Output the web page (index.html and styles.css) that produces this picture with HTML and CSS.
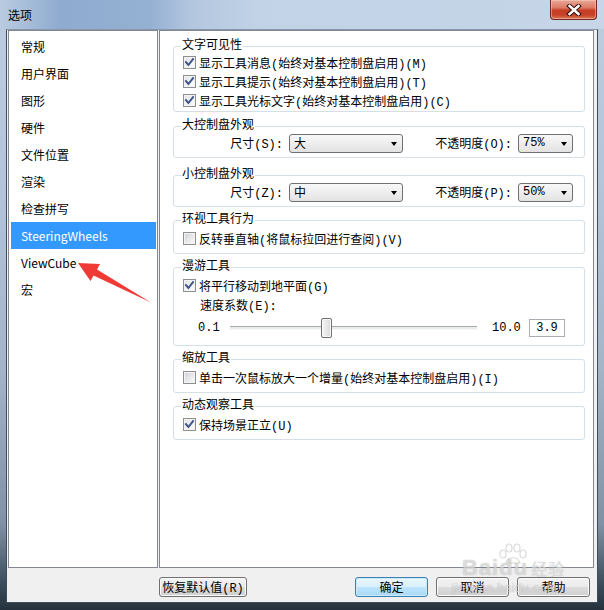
FILE: index.html
```html
<!DOCTYPE html>
<html lang="zh-CN">
<head>
<meta charset="utf-8">
<title>选项</title>
<link rel="stylesheet" href="styles.css">
</head>
<body>
<div class="window">
  <div class="titlebar">
    <span class="title">选项</span>
    <span class="close"><svg width="16" height="12" viewBox="0 0 16 12"><path d="M3.5 2 L12.5 10 M12.5 2 L3.5 10" stroke="#40160f" stroke-width="4.6" stroke-linecap="square" fill="none"/><path d="M3.5 2 L12.5 10 M12.5 2 L3.5 10" stroke="#ffffff" stroke-width="2.4" stroke-linecap="square" fill="none"/></svg></span>
  </div>
  <div class="client">
    <div class="panes">
      <ul class="nav">
        <li>常规</li>
        <li>用户界面</li>
        <li>图形</li>
        <li>硬件</li>
        <li>文件位置</li>
        <li>渲染</li>
        <li>检查拼写</li>
        <li class="sel">SteeringWheels</li>
        <li>ViewCube</li>
        <li>宏</li>
      </ul>
      <div class="content">
        <fieldset class="grp tight">
          <legend>文字可见性</legend>
          <div class="row"><span class="cb on"><svg viewBox="0 0 11 11"><path d="M2 5.2 L4.4 8 L9 2.2"/></svg></span>显示工具消息(始终对基本控制盘启用)(M)</div>
          <div class="row"><span class="cb on"><svg viewBox="0 0 11 11"><path d="M2 5.2 L4.4 8 L9 2.2"/></svg></span>显示工具提示(始终对基本控制盘启用)(T)</div>
          <div class="row"><span class="cb on"><svg viewBox="0 0 11 11"><path d="M2 5.2 L4.4 8 L9 2.2"/></svg></span>显示工具光标文字(始终对基本控制盘启用)(C)</div>
        </fieldset>
        <fieldset class="grp combo spaced">
          <legend>大控制盘外观</legend>
          <div class="ddrow">
            <span class="lbl l1">尺寸(S):</span>
            <span class="dd wide"><span>大</span><i class="tri"></i></span>
            <span class="lbl l2">不透明度(O):</span>
            <span class="dd narrow"><span>75%</span><i class="tri"></i></span>
          </div>
        </fieldset>
        <fieldset class="grp combo">
          <legend>小控制盘外观</legend>
          <div class="ddrow">
            <span class="lbl l1">尺寸(Z):</span>
            <span class="dd wide"><span>中</span><i class="tri"></i></span>
            <span class="lbl l2">不透明度(P):</span>
            <span class="dd narrow"><span>50%</span><i class="tri"></i></span>
          </div>
        </fieldset>
        <fieldset class="grp">
          <legend>环视工具行为</legend>
          <div class="row"><span class="cb"></span>反转垂直轴(将鼠标拉回进行查阅)(V)</div>
        </fieldset>
        <fieldset class="grp walk">
          <legend>漫游工具</legend>
          <div class="row"><span class="cb on"><svg viewBox="0 0 11 11"><path d="M2 5.2 L4.4 8 L9 2.2"/></svg></span>将平行移动到地平面(G)</div>
          <div class="row indent">速度系数(E):</div>
          <div class="slrow">
            <span class="lo">0.1</span>
            <span class="track"><span class="thumb" style="left:calc((100% - 11px) * 0.384)"></span></span>
            <span class="hi">10.0</span>
            <span class="num">3.9</span>
          </div>
        </fieldset>
        <fieldset class="grp">
          <legend>缩放工具</legend>
          <div class="row"><span class="cb"></span>单击一次鼠标放大一个增量(始终对基本控制盘启用)(I)</div>
        </fieldset>
        <fieldset class="grp">
          <legend>动态观察工具</legend>
          <div class="row"><span class="cb on"><svg viewBox="0 0 11 11"><path d="M2 5.2 L4.4 8 L9 2.2"/></svg></span>保持场景正立(U)</div>
        </fieldset>
      </div>
    </div>
    <div class="buttons">
      <button class="btn reset">恢复默认值(R)</button>
      <button class="btn ok">确定</button>
      <button class="btn">取消</button>
      <button class="btn">帮助</button>
    </div>
  </div>
  <svg class="arrow" width="604" height="610" viewBox="0 0 604 610"><polygon points="78,263 100,264 97,269.5 151,302.5 93.5,275.5 90.5,281" fill="#f03a36"/></svg>
  <div class="watermark">
    <svg class="paw" width="34" height="22" viewBox="0 0 34 22"><g fill="none" stroke="rgba(150,150,150,0.35)" stroke-width="1.2"><ellipse cx="7" cy="11" rx="3" ry="4"/><ellipse cx="13" cy="5" rx="3" ry="4"/><ellipse cx="21" cy="5" rx="3" ry="4"/><ellipse cx="27" cy="11" rx="3" ry="4"/><path d="M10 20 C12 13 22 13 24 20 Z"/></g></svg>
    <div class="wm1">Baidu<span class="wmcn">经验</span></div>
    <div class="wm2">jingyan.baidu.com</div>
  </div>
</div>
</body>
</html>
```
FILE: styles.css
```css
* { box-sizing: border-box; }
html, body { margin: 0; padding: 0; }
body {
  width: 604px;
  height: 610px;
  overflow: hidden;
  font-family: "Noto Sans CJK SC", sans-serif;
  font-size: 12px;
  color: #000;
}
.window {
  position: relative;
  width: 604px;
  height: 610px;
  display: flex;
  flex-direction: column;
  padding: 0 6px 7px;
  background: linear-gradient(180deg, #bccde2 0, #b3c5da 30%, #a2b5c9 60%, #7f92a5 86%, #3a4a58 96%, #26333e 100%);
}
.titlebar {
  height: 29px;
  flex: none;
  display: flex;
  justify-content: space-between;
  margin: 0 -6px;
  padding: 0 7px 0 8px;
  background: linear-gradient(90deg, #b9cbe0 0, #a4bcd9 30px, #8fabcf 60px, #94b0d3 150px, #b2c6de 190px, #c2d3e7 260px, #c6d5e8 100%);
}
.title {
  align-self: center;
  line-height: 14px;
  padding-top: 1px;
}
.close {
  width: 47px;
  height: 20px;
  display: flex;
  align-items: center;
  justify-content: center;
  border: 1px solid #6b2a1f;
  border-top: none;
  border-radius: 0 0 4px 4px;
  background: linear-gradient(180deg, #e9a898 0, #dc7b66 40%, #c63d24 55%, #c6432a 80%, #dd7c5a 100%);
  box-shadow: inset 0 0 0 1px rgba(255, 215, 200, 0.45);
}
.client {
  flex: 1;
  display: flex;
  flex-direction: column;
  background: #f0f0f0;
  border: 1px solid #3e4d5b;
  border-top-color: #8797aa;
  padding: 0 3px 5px 0;
}
.panes {
  flex: 1;
  display: flex;
  gap: 1px;
  min-height: 0;
}
.nav {
  list-style: none;
  margin: 0 0 0 1px;
  width: 150px;
  padding: 2px 1px 2px 2px;
  background: #fff;
  border: 1px solid #828790;
}
.nav li {
  height: 27px;
  line-height: 27px;
  padding-left: 10px;
  white-space: nowrap;
}
.nav li.sel {
  background: #3399ff;
  color: #fff;
}
.content {
  flex: 1;
  background: #fff;
  border: 1px solid #828790;
  padding: 8px 8px 0 13px;
  font-family: "Liberation Mono", "Noto Sans CJK SC", monospace;
}
.grp {
  margin: 0 0 6px;
  padding: 2px 8px 5px 9px;
  border: 1px solid #d5dfe5;
  border-radius: 3px;
  min-width: 0;
}
.grp.tight { padding-top: 0; padding-bottom: 1px; margin-bottom: 7px; }
.grp.combo { padding-top: 0; padding-bottom: 4px; }
.grp.spaced { margin-bottom: 10px; }
.grp.walk { padding-bottom: 7px; }
.grp legend {
  padding: 0 1px;
  margin-left: -2px;
  line-height: 14px;
}
.row {
  display: flex;
  align-items: center;
  height: 19px;
  white-space: nowrap;
}
.row.indent { padding-left: 17px; }
.cb {
  width: 13px;
  height: 13px;
  flex: none;
  margin-right: 3px;
  border: 1px solid #8e8f8f;
  background: linear-gradient(135deg, #cdd0d4 0, #e6e7e9 50%, #fbfbfb 100%);
  box-shadow: inset 0 0 0 1px #f3f3f3;
  display: flex;
}
.cb.on { background: linear-gradient(135deg, #dfe1e4 0, #f0f1f2 50%, #fdfdfd 100%); }
.cb svg { width: 11px; height: 11px; }
.cb svg path { fill: none; stroke: #3f5589; stroke-width: 2; stroke-linecap: square; }
.ddrow {
  display: flex;
  align-items: center;
  height: 20px;
  white-space: nowrap;
}
.lbl { text-align: right; flex: none; }
.l1 { width: 100px; }
.l2 { width: 109px; }
.dd {
  flex: none;
  height: 19px;
  margin-left: 6px;
  display: flex;
  align-items: center;
  justify-content: space-between;
  padding: 0 5px 0 4px;
  border: 1px solid #707070;
  border-radius: 3px;
  background: linear-gradient(180deg, #f8f8f8 0, #eeeeee 50%, #e2e2e2 100%);
}
.dd.wide { width: 114px; }
.dd.narrow { width: 55px; }
.tri {
  width: 0;
  height: 0;
  margin-top: 2px;
  border-top: 4px solid #000;
  border-left: 3.5px solid transparent;
  border-right: 3.5px solid transparent;
}
.slrow {
  display: flex;
  align-items: center;
  height: 21px;
  margin-top: 3px;
  padding-left: 15px;
  white-space: nowrap;
}
.lo { width: 32px; flex: none; }
.track {
  position: relative;
  width: 247px;
  height: 4px;
  flex: none;
  background: #e7ecec;
  border-top: 1px solid #a9a9a9;
  border-bottom: 1px solid #f7f7f7;
}
.thumb {
  position: absolute;
  top: -9px;
  width: 11px;
  height: 20px;
  border: 1px solid #707070;
  border-radius: 2px;
  background: linear-gradient(90deg, #f4f4f4 0, #e6e6e6 60%, #d6d6d6 100%);
  box-shadow: inset 0 0 0 1px #fbfbfb;
}
.hi { width: 37px; margin-left: 15px; flex: none; }
.num {
  width: 36px;
  height: 18px;
  flex: none;
  border: 1px solid #abadb3;
  text-align: center;
  line-height: 16px;
  background: #fff;
}
.buttons {
  flex: none;
  display: flex;
  gap: 8px;
  height: 20px;
  margin-top: 9px;
  padding-right: 4px;
}
.btn {
  width: 73px;
  height: 20px;
  padding: 0;
  font-family: "Liberation Mono", "Noto Sans CJK SC", monospace;
  font-size: 12px;
  color: #000;
  border: 1px solid #707070;
  border-radius: 3px;
  background: linear-gradient(180deg, #f2f2f2 0, #ebebeb 49%, #dddddd 50%, #cfcfcf 100%);
  box-shadow: inset 0 0 0 1px #fcfcfc;
  white-space: nowrap;
}
.btn.reset { width: 88px; margin-left: 152px; margin-right: auto; }
.btn.ok {
  border-color: #3c7fb1;
  background: linear-gradient(180deg, #eaf6fd 0, #d9f0fc 48%, #bee6fd 50%, #a7d9f5 100%);
  box-shadow: inset 0 0 0 1px #c8ecfd;
}
.arrow {
  position: absolute;
  left: 0;
  top: 0;
  pointer-events: none;
}
.watermark {
  position: absolute;
  left: 452px;
  top: 543px;
  width: 125px;
  pointer-events: none;
  font-family: "Liberation Sans", sans-serif;
  color: rgba(255, 255, 255, 0.55);
  text-shadow: 0 0 1px rgba(110, 110, 110, 0.55);
}
.paw { position: absolute; left: 44px; top: 0; }
.wm1 {
  margin-top: 14px;
  padding-left: 10px;
  font-size: 22px;
  font-weight: bold;
  line-height: 22px;
  letter-spacing: 1px;
}
.wmcn {
  font-family: "Noto Sans CJK SC", sans-serif;
  font-size: 16px;
  font-weight: normal;
  margin-left: 3px;
}
.wm2 {
  font-size: 12px;
  line-height: 14px;
  margin-top: 2px;
  letter-spacing: 0.5px;
}
```
